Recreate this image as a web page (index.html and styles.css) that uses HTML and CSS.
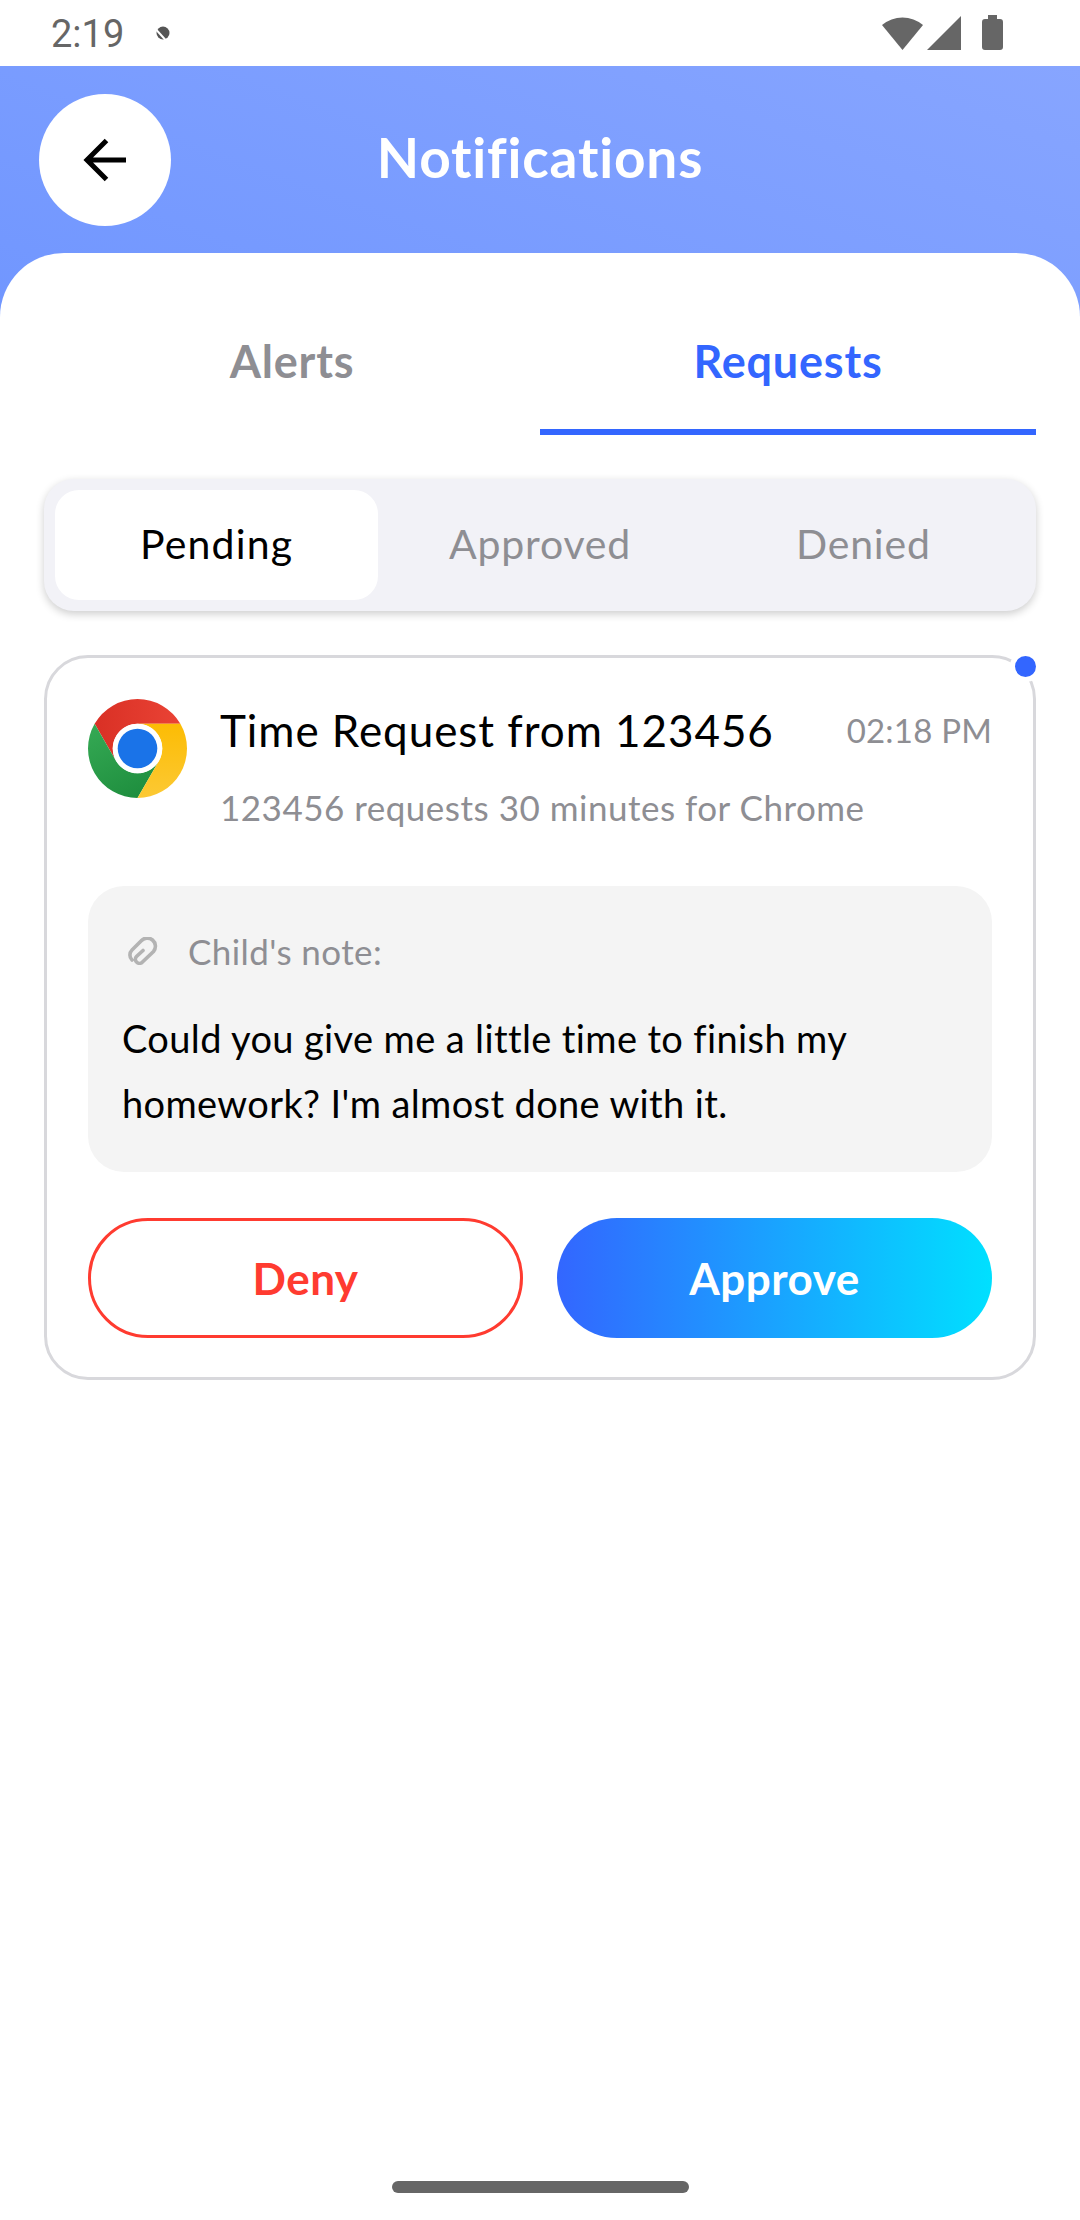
FILE: index.html
```html
<!DOCTYPE html>
<html lang="en">
  <head>
    <meta charset="UTF-8" />
    <meta name="viewport" content="width=device-width, initial-scale=1.0" />
    <title>Notifications</title>
    <link rel="stylesheet" href="styles.css">
  </head>
  <body>
    <div class="status-bar">
      <div class="status-left">
        <span class="clock">2:19</span>
        <svg class="status-dot" width="14" height="14" viewBox="0 0 14 14">
          <circle cx="7" cy="7" r="6.5" fill="#555" />
          <path d="M0 3.5 L9.5 14" stroke="#fff" stroke-width="2" />
        </svg>
      </div>
      <div class="status-right">
        <svg width="41" height="34" viewBox="0 0 41 34"><path d="M20.5 34 L0 9 A32 32 0 0 1 41 9 Z" fill="#666" /></svg>
        <svg width="34" height="34" viewBox="0 0 34 34"><path d="M0 34 L34 0 V34 Z" fill="#666" /></svg>
        <svg class="battery" width="21" height="35" viewBox="0 0 21 35"><path d="M6 0 H15 V4 H18 A3 3 0 0 1 21 7 V32 A3 3 0 0 1 18 35 H3 A3 3 0 0 1 0 32 V7 A3 3 0 0 1 3 4 H6 Z" fill="#666" /></svg>
      </div>
    </div>

    <div class="app">
      <div class="nav">
        <button class="back">
          <svg width="44" height="44" viewBox="0 0 44 44">
            <path d="M43 22 H4 M23.5 2.5 L4 22 L23.5 41.5" fill="none" stroke="#000" stroke-width="5" />
          </svg>
        </button>
        <h1 class="nav-title">Notifications</h1>
      </div>

      <div class="sheet">
        <div class="tabs">
          <a class="tab">Alerts</a>
          <a class="tab active">Requests</a>
        </div>

        <div class="segments">
          <a class="segment active">Pending</a>
          <a class="segment">Approved</a>
          <a class="segment">Denied</a>
        </div>

        <div class="card">
          <span class="unread"></span>
          <div class="card-head">
            <svg class="app-icon" width="99" height="99" viewBox="0 0 100 100">
              <defs>
                <linearGradient id="red" x1="0" y1="0" x2="1" y2="0">
                  <stop offset="0" stop-color="#d93025" />
                  <stop offset="1" stop-color="#ea4335" />
                </linearGradient>
                <linearGradient id="green" x1="0.2" y1="0" x2="0.7" y2="1">
                  <stop offset="0" stop-color="#34a853" />
                  <stop offset="1" stop-color="#1e8e3e" />
                </linearGradient>
                <linearGradient id="yellow" x1="0.5" y1="0" x2="0.5" y2="1">
                  <stop offset="0" stop-color="#fcbc04" />
                  <stop offset="1" stop-color="#fcc934" />
                </linearGradient>
              </defs>
              <path d="M50 0 A50 50 0 0 1 93.3 25 H50 A25 25 0 0 0 28.35 62.5 L6.7 25 A50 50 0 0 1 50 0 Z" fill="url(#red)" />
              <path d="M6.7 25 A50 50 0 0 0 50 100 L71.65 62.5 A25 25 0 0 1 28.35 62.5 Z" fill="url(#green)" />
              <path d="M93.3 25 A50 50 0 0 1 50 100 L71.65 62.5 A25 25 0 0 0 50 25 Z" fill="url(#yellow)" />
              <circle cx="50" cy="50" r="25" fill="#fff" />
              <circle cx="50" cy="50" r="20" fill="#1a73e8" />
            </svg>
            <div class="card-info">
              <div class="card-title-row">
                <div class="card-title">Time Request from 123456</div>
                <div class="card-time">02:18 PM</div>
              </div>
              <div class="card-sub">123456 requests 30 minutes for Chrome</div>
            </div>
          </div>

          <div class="note">
            <div class="note-label">
              <svg class="clip" width="30" height="28" viewBox="0 0 30 28">
                <path d="M4 23 A7 7 0 0 1 4 13 L13 4 A7.5 7.5 0 0 1 25.5 14.5 L14.5 25 A4 4 0 0 1 8.5 19.5 L15 13.5" fill="none" stroke="#b3b3b3" stroke-width="3.6" stroke-linecap="round" />
              </svg>
              <span>Child's note:</span>
            </div>
            <p class="note-text">Could you give me a little time to finish my homework? I'm almost done with it.</p>
          </div>

          <div class="actions">
            <button class="btn btn-deny">Deny</button>
            <button class="btn btn-approve">Approve</button>
          </div>
        </div>

        <div class="home-bar"></div>
      </div>
    </div>
  </body>
</html>
```

FILE: styles.css
```css
* {
  box-sizing: border-box;
}

html,
body {
  height: 100%;
}

body {
  margin: 0;
  display: flex;
  flex-direction: column;
  background: #fff;
  font-family: "Lato", "Noto Sans", sans-serif;
}

.status-bar {
  display: flex;
  align-items: center;
  justify-content: space-between;
  height: 66px;
  padding: 0 77px 0 51px;
  background: #fff;
}

.status-left {
  display: flex;
  align-items: center;
  gap: 32px;
}

.clock {
  padding-top: 2px;
  font-family: "Roboto", sans-serif;
  font-size: 38px;
  color: #666;
}

.status-right {
  display: flex;
  align-items: flex-end;
  gap: 4px;
  padding-bottom: 1px;
}

.status-right .battery {
  margin-left: 17px;
}

.app {
  flex: 1;
  display: flex;
  flex-direction: column;
  background: linear-gradient(20deg, #7096ff, #87a5ff) top / 100% 260px no-repeat;
}

.nav {
  position: relative;
  display: flex;
  align-items: center;
  justify-content: center;
  height: 187px;
  padding-bottom: 6px;
}

.back {
  position: absolute;
  left: 39px;
  top: 28px;
  display: flex;
  align-items: center;
  justify-content: center;
  width: 132px;
  height: 132px;
  padding: 0;
  border: none;
  border-radius: 50%;
  background: #fff;
}

.nav-title {
  margin: 0;
  font-size: 55px;
  font-weight: 700;
  letter-spacing: 0.8px;
  color: #fff;
}

.sheet {
  flex: 1;
  display: flex;
  flex-direction: column;
  padding: 0 44px;
  border-radius: 64px 64px 0 0;
  background: #fff;
}

.tabs {
  display: flex;
  height: 182px;
}

.tab {
  flex: 1;
  padding-top: 81px;
  text-align: center;
  font-size: 45px;
  font-weight: 700;
  letter-spacing: 0.8px;
  color: #8e8e93;
}

.tab.active {
  border-bottom: 6px solid #3366ff;
  color: #3366ff;
}

.segments {
  display: flex;
  height: 132px;
  margin-top: 44px;
  padding: 11px;
  border-radius: 30px;
  background: #f2f2f7;
  box-shadow: 0 3px 8px rgba(0, 0, 0, 0.2);
}

.segment {
  flex: 1;
  display: flex;
  align-items: center;
  justify-content: center;
  padding-bottom: 4px;
  border-radius: 24px;
  font-size: 41px;
  letter-spacing: 0.8px;
  color: #8e8e93;
}

.segment.active {
  background: #fff;
  color: #000;
  letter-spacing: 1.2px;
}

.card {
  position: relative;
  height: 725px;
  margin-top: 44px;
  padding: 41px 41px 0;
  border: 3px solid #d8d8dc;
  border-radius: 44px;
}

.unread {
  position: absolute;
  top: -2px;
  right: -3px;
  width: 21px;
  height: 21px;
  border-radius: 50%;
  background: #3366ff;
  box-shadow: 0 0 0 5px #fff;
}

.card-head {
  display: flex;
  gap: 33px;
}

.app-icon {
  flex: none;
}

.card-info {
  flex: 1;
}

.card-title-row {
  display: flex;
  align-items: center;
  justify-content: space-between;
  height: 62px;
}

.card-title {
  font-size: 44px;
  letter-spacing: 0.95px;
  color: #000;
}

.card-time {
  font-size: 33px;
  letter-spacing: 0.2px;
  color: #8e8e93;
}

.card-sub {
  margin-top: 25px;
  font-size: 35px;
  letter-spacing: 0.5px;
  color: #8e8e93;
}

.note {
  height: 286px;
  margin-top: 58px;
  padding: 44px 34px 0;
  border-radius: 36px;
  background: #f4f4f4;
}

.note-label {
  display: flex;
  align-items: center;
  gap: 30px;
  font-size: 35px;
  letter-spacing: 0.4px;
  color: #8e8e93;
}

.clip {
  margin-left: 6px;
}

.note-text {
  margin: 34px 0 0;
  font-size: 38px;
  letter-spacing: 0.37px;
  line-height: 65px;
  color: #000;
}

.actions {
  display: grid;
  grid-template-columns: 1fr 1fr;
  gap: 34px;
  margin-top: 46px;
}

.btn {
  height: 120px;
  border-radius: 60px;
  font-family: inherit;
  font-size: 44px;
  font-weight: 700;
  letter-spacing: 0.5px;
}

.btn-deny {
  border: 3px solid #ff3b30;
  background: #fff;
  color: #ff3b30;
}

.btn-approve {
  border: none;
  background: linear-gradient(90deg, #3366ff, #00e0ff);
  color: #fff;
}

.home-bar {
  width: 297px;
  height: 12px;
  margin: auto auto 27px;
  border-radius: 6px;
  background: #666;
}
```
